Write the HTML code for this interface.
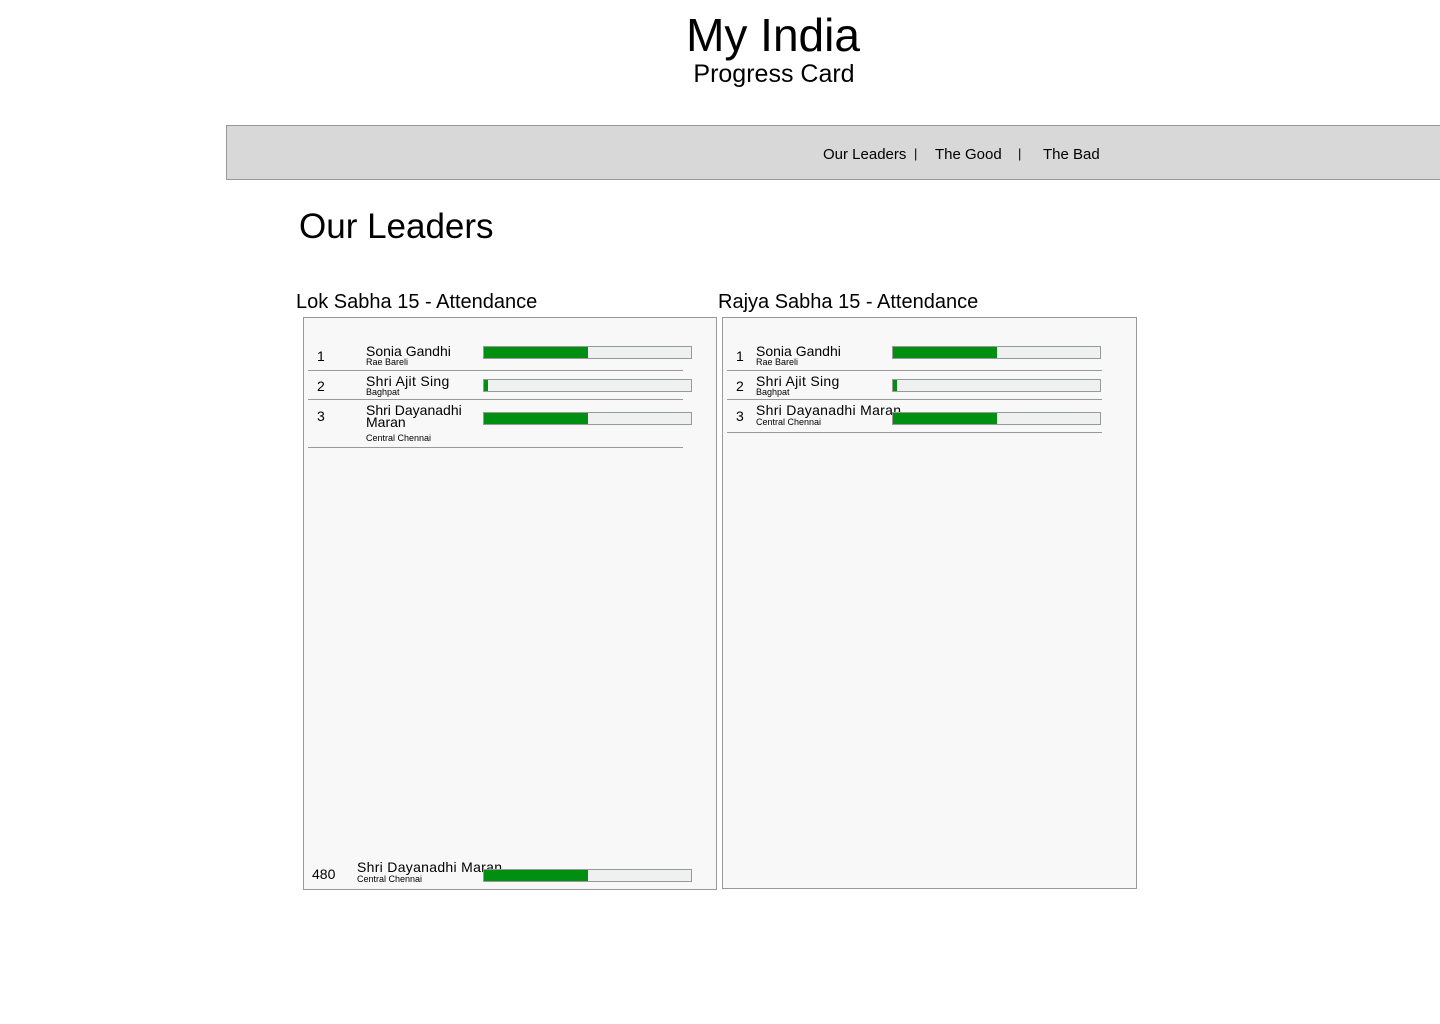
<!DOCTYPE html>
<html><head><meta charset="utf-8"><style>
body{margin:0;width:1440px;height:1024px;background:#fff;font-family:"Liberation Sans",Arial,sans-serif;color:#000;position:relative;overflow:hidden}
.a{position:absolute;line-height:1;white-space:nowrap}
.nav{position:absolute;left:226px;top:125px;width:1220px;height:55px;background:#d8d8d8;border:1px solid #999;box-sizing:border-box}
.panel{position:absolute;background:#f8f8f8;border:1px solid #999;box-sizing:border-box}
.bar{position:absolute;height:13px;background:#eef1f0;border:1px solid #999;box-sizing:border-box}
.bar i{position:absolute;left:0;top:0;bottom:0;background:#008f11}
.ln{position:absolute;height:1px;background:#999}
.n{font-size:14px}.s{font-size:9px}
</style></head><body>
<div class="a" style="left:0;width:1546px;text-align:center;top:12px;font-size:46px">My India</div>
<div class="a" style="left:0;width:1548px;text-align:center;top:62px;font-size:25px">Progress Card</div>
<div class="nav"></div>
<div class="a" style="left:823px;top:147px;font-size:15px">Our Leaders</div>
<div class="a" style="left:914px;top:147px;font-size:13px">|</div>
<div class="a" style="left:935px;top:147px;font-size:15px">The Good</div>
<div class="a" style="left:1018px;top:147px;font-size:13px">|</div>
<div class="a" style="left:1043px;top:147px;font-size:15px">The Bad</div>
<div class="a" style="left:299px;top:209px;font-size:35px">Our Leaders</div>
<div class="a" style="left:296px;top:292px;font-size:20px">Lok Sabha 15 - Attendance</div>
<div class="a" style="left:718px;top:292px;font-size:20px">Rajya Sabha 15 - Attendance</div>

<div class="panel" style="left:303px;top:317px;width:414px;height:573px"></div>
<div class="panel" style="left:722px;top:317px;width:415px;height:572px"></div>

<!-- left -->
<div class="a n" style="left:317px;top:349px">1</div>
<div class="a n" style="left:366px;top:344px">Sonia Gandhi</div>
<div class="a s" style="left:366px;top:358px">Rae Bareli</div>
<div class="bar" style="left:483px;top:346px;width:209px"><i style="width:104px"></i></div>
<div class="ln" style="left:308px;top:370px;width:375px"></div>
<div class="a n" style="left:317px;top:379px">2</div>
<div class="a n" style="left:366px;top:374px;letter-spacing:0.3px">Shri Ajit Sing</div>
<div class="a s" style="left:366px;top:388px">Baghpat</div>
<div class="bar" style="left:483px;top:379px;width:209px"><i style="width:4px"></i></div>
<div class="ln" style="left:308px;top:399px;width:375px"></div>
<div class="a n" style="left:317px;top:409px">3</div>
<div class="a n" style="left:366px;top:403px">Shri Dayanadhi</div>
<div class="a n" style="left:366px;top:415px">Maran</div>
<div class="a s" style="left:366px;top:434px">Central Chennai</div>
<div class="bar" style="left:483px;top:412px;width:209px"><i style="width:104px"></i></div>
<div class="ln" style="left:308px;top:447px;width:375px"></div>
<div class="a n" style="left:312px;top:867px">480</div>
<div class="a n" style="left:357px;top:860px;letter-spacing:0.3px">Shri Dayanadhi Maran</div>
<div class="a s" style="left:357px;top:875px">Central Chennai</div>
<div class="bar" style="left:483px;top:869px;width:209px"><i style="width:104px"></i></div>

<!-- right -->
<div class="a n" style="left:736px;top:349px">1</div>
<div class="a n" style="left:756px;top:344px">Sonia Gandhi</div>
<div class="a s" style="left:756px;top:358px">Rae Bareli</div>
<div class="bar" style="left:892px;top:346px;width:209px"><i style="width:104px"></i></div>
<div class="ln" style="left:727px;top:370px;width:375px"></div>
<div class="a n" style="left:736px;top:379px">2</div>
<div class="a n" style="left:756px;top:374px;letter-spacing:0.3px">Shri Ajit Sing</div>
<div class="a s" style="left:756px;top:388px">Baghpat</div>
<div class="bar" style="left:892px;top:379px;width:209px"><i style="width:4px"></i></div>
<div class="ln" style="left:727px;top:399px;width:375px"></div>
<div class="a n" style="left:736px;top:409px">3</div>
<div class="a n" style="left:756px;top:403px;letter-spacing:0.3px">Shri Dayanadhi Maran</div>
<div class="a s" style="left:756px;top:418px">Central Chennai</div>
<div class="bar" style="left:892px;top:412px;width:209px"><i style="width:104px"></i></div>
<div class="ln" style="left:727px;top:432px;width:375px"></div>
</body></html>
